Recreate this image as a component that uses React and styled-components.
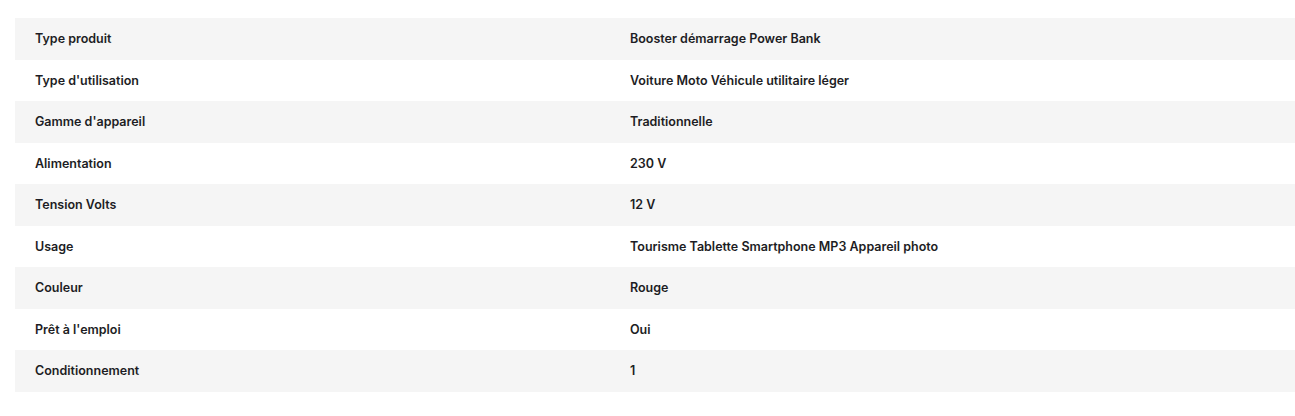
import styled, { createGlobalStyle } from "styled-components";

const specs = [
  ["Type produit", "Booster démarrage Power Bank"],
  ["Type d'utilisation", "Voiture Moto Véhicule utilitaire léger"],
  ["Gamme d'appareil", "Traditionnelle"],
  ["Alimentation", "230 V"],
  ["Tension Volts", "12 V"],
  ["Usage", "Tourisme Tablette Smartphone MP3 Appareil photo"],
  ["Couleur", "Rouge"],
  ["Prêt à l'emploi", "Oui"],
  ["Conditionnement", "1"],
];

const GlobalStyle = createGlobalStyle`
  body {
    margin: 0;
    background: #ffffff;
    font-family: Inter, "Open Sans", sans-serif;
  }
`;

const Wrapper = styled.section`
  padding: 18px 0 0 15px;
`;

const Table = styled.dl`
  margin: 0;
  display: flex;
  flex-direction: column;
`;

const Row = styled.div`
  display: grid;
  grid-template-columns: 595px 1fr;
  height: 41.5px;
  align-items: center;
  background: ${({ $striped }) => ($striped ? "#f5f5f5" : "#ffffff")};
`;

const Label = styled.dt`
  padding-left: 20px;
  font-size: 12.5px;
  font-weight: 600;
  color: #1d1d24;
`;

const Value = styled.dd`
  margin: 0;
  padding-left: 20px;
  font-size: 12.5px;
  font-weight: 600;
  color: #1d1d24;
`;

const App = () => {
  return (
    <>
      <GlobalStyle />
      <Wrapper>
        <Table>
          {specs.map(([label, value], i) => (
            <Row key={label} $striped={i % 2 === 0}>
              <Label>{label}</Label>
              <Value>{value}</Value>
            </Row>
          ))}
        </Table>
      </Wrapper>
    </>
  );
};

export default App;
